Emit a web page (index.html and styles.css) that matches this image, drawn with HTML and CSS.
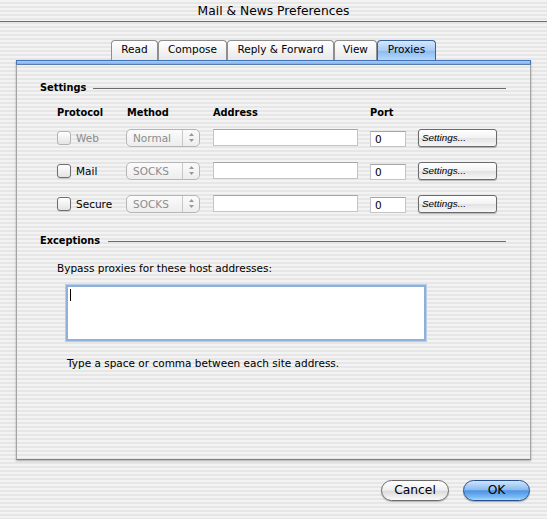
FILE: index.html
```html
<!DOCTYPE html>
<html>
<head>
<meta charset="utf-8">
<link rel="stylesheet" href="styles.css">
</head>
<body>
<div class="titlebar">Mail &amp; News Preferences</div>
<div class="tabs">
  <div class="tab t-read">Read</div>
  <div class="tab t-compose">Compose</div>
  <div class="tab t-reply">Reply &amp; Forward</div>
  <div class="tab t-view">View</div>
  <div class="tab t-proxies active">Proxies</div>
</div>
<div class="panel">
  <div class="bluebar"></div>
  <div class="content">
    <div class="ghead"><span>Settings</span><div class="rule"></div></div>
    <div class="grid">
      <div class="hdr">Protocol</div>
      <div class="hdr hdr-method">Method</div>
      <div class="hdr">Address</div>
      <div class="hdr">Port</div>
      <div></div>

      <div class="proto disabled"><span class="checkbox"></span><span>Web</span></div>
      <div class="popup"><span class="pop-text">Normal</span><span class="pop-arrows"><svg width="7" height="11" viewBox="0 0 7 11"><path d="M3.5 1 L6 4 L1 4 Z M3.5 10 L6 7 L1 7 Z" fill="#9a9a9a"/></svg></span></div>
      <div class="field addr"></div>
      <div class="field port">0</div>
      <div class="sbtn">Settings...</div>

      <div class="proto"><span class="checkbox"></span><span>Mail</span></div>
      <div class="popup"><span class="pop-text">SOCKS</span><span class="pop-arrows"><svg width="7" height="11" viewBox="0 0 7 11"><path d="M3.5 1 L6 4 L1 4 Z M3.5 10 L6 7 L1 7 Z" fill="#9a9a9a"/></svg></span></div>
      <div class="field addr"></div>
      <div class="field port">0</div>
      <div class="sbtn">Settings...</div>

      <div class="proto"><span class="checkbox"></span><span>Secure</span></div>
      <div class="popup"><span class="pop-text">SOCKS</span><span class="pop-arrows"><svg width="7" height="11" viewBox="0 0 7 11"><path d="M3.5 1 L6 4 L1 4 Z M3.5 10 L6 7 L1 7 Z" fill="#9a9a9a"/></svg></span></div>
      <div class="field addr"></div>
      <div class="field port">0</div>
      <div class="sbtn">Settings...</div>
    </div>

    <div class="ghead exc"><span>Exceptions</span><div class="rule"></div></div>
    <div class="bypass">Bypass proxies for these host addresses:</div>
    <div class="textarea"><span class="caret"></span></div>
    <div class="hint">Type a space or comma between each site address.</div>
  </div>
</div>
<div class="buttons">
  <div class="btn cancel">Cancel</div>
  <div class="btn ok">OK</div>
</div>
</body>
</html>
```
FILE: styles.css
```css
html, body {
  margin: 0;
  padding: 0;
}
body {
  width: 547px;
  height: 519px;
  overflow: hidden;
  font-family: "DejaVu Sans", sans-serif;
  color: #000;
  background: repeating-linear-gradient(to bottom, #f3f3f3 0 2px, #e6e6e6 2px 4px);
}
.titlebar {
  height: 21px;
  border-bottom: 1px solid #6e6e6e;
  font-size: 12.3px;
  line-height: 22px;
  text-align: center;
}
.tabs {
  display: flex;
  justify-content: center;
  margin-top: 18px;
  height: 20px;
}
.tab {
  box-sizing: border-box;
  height: 20px;
  border: 1px solid #8e8e8e;
  border-bottom: none;
  border-radius: 4px 4px 0 0;
  background: linear-gradient(#ffffff, #e8e8e8);
  font-size: 10.5px;
  line-height: 16px;
  text-align: center;
}
.t-read { width: 47px; }
.t-compose { width: 69px; }
.t-reply { width: 107px; }
.t-view { width: 43px; }
.t-proxies { width: 59px; }
.tab.active {
  border-color: #36629f;
  background: linear-gradient(#d6e8fc, #a6ccf6 50%, #8dbcf2 55%, #b7d8fa);
}
.panel {
  margin: 0 16px;
  height: 400px;
  box-sizing: border-box;
  border: 1px solid #a4a4a4;
  border-top: none;
  border-bottom-color: #808080;
  box-shadow: 0 1px 2px rgba(0, 0, 0, 0.3);
}
.bluebar {
  height: 5px;
  margin: 0 -1px;
  box-sizing: border-box;
  border-top: 1px solid #4474b8;
  border-bottom: 1px solid #5b7da9;
  border-left: 1px solid #4474b8;
  border-right: 1px solid #4474b8;
  border-radius: 1px;
  background: linear-gradient(#a9cdf6, #7fb2ef);
}
.content {
  padding: 15px 24px 0 23px;
}
.ghead {
  display: flex;
  align-items: center;
  height: 14px;
  gap: 7px;
  font-weight: bold;
  font-size: 9.8px;
}
.ghead .rule {
  flex: 1;
  height: 1px;
  margin-top: 2px;
  background: #6c6c6c;
}
.ghead.exc {
  margin-top: 13px;
  gap: 8px;
}
.grid {
  display: grid;
  grid-template-columns: 69px 87px 157px 48px 79px;
  grid-template-rows: 18px repeat(3, 33px);
  align-items: center;
  margin: 9px 0 0 17px;
}
.hdr {
  font-weight: bold;
  font-size: 9.8px;
}
.hdr-method { padding-left: 1px; }
.proto {
  display: flex;
  align-items: center;
  gap: 5px;
  font-size: 10.5px;
}
.checkbox {
  width: 14px;
  height: 14px;
  box-sizing: border-box;
  border: 1px solid #6f6f6f;
  border-radius: 3px;
  background: linear-gradient(#ffffff, #e4e4e4);
  box-shadow: 0 1px 1px rgba(0, 0, 0, 0.12);
}
.proto.disabled { color: #8a8a8a; }
.proto.disabled .checkbox { border-color: #b3b3b3; box-shadow: none; }
.popup {
  display: flex;
  width: 74px;
  height: 18px;
  box-sizing: border-box;
  border: 1px solid #b6b6b6;
  border-radius: 5px;
  background: linear-gradient(#fbfbfb, #ededed);
  color: #8c8c8c;
  font-size: 10.5px;
  line-height: 16px;
}
.pop-text {
  flex: 1;
  padding-left: 6px;
}
.pop-arrows {
  width: 16px;
  border-left: 1px solid #c8c8c8;
  display: flex;
  align-items: center;
  justify-content: center;
}
.field {
  box-sizing: border-box;
  height: 17px;
  background: #fff;
  border: 1px solid #c4c4c4;
  border-top-color: #a6a6a6;
}
.addr { width: 145px; }
.port {
  width: 36px;
  height: 16px;
  margin-top: 3px;
  font-size: 10.5px;
  line-height: 14px;
  padding-left: 4px;
}
.sbtn {
  box-sizing: border-box;
  width: 79px;
  height: 18px;
  border: 1px solid #6a6a6a;
  border-radius: 3px;
  background: linear-gradient(#ffffff, #f2f2f2 50%, #e2e2e2 51%, #f7f7f7);
  box-shadow: 0 1px 1px rgba(0, 0, 0, 0.25);
  font-family: "Liberation Sans", sans-serif;
  font-style: italic;
  font-size: 9.9px;
  line-height: 16px;
  padding-left: 3px;
}
.bypass {
  margin: 14px 0 0 17px;
  font-size: 10.5px;
  line-height: 14px;
}
.textarea {
  box-sizing: border-box;
  width: 360px;
  height: 56px;
  margin: 10px 0 0 26px;
  background: #fff;
  border: 2px solid #8fb0d8;
  box-shadow: 0 0 0 1px #b9cde6;
  padding: 2px 0 0 2px;
}
.caret {
  display: block;
  width: 1px;
  height: 12px;
  background: #000;
}
.hint {
  margin: 15px 0 0 27px;
  font-size: 10.5px;
  line-height: 14px;
}
.buttons {
  display: flex;
  justify-content: flex-end;
  gap: 14px;
  margin-top: 20px;
  padding-right: 17px;
}
.btn {
  box-sizing: border-box;
  height: 21px;
  border-radius: 11px;
  font-size: 12.3px;
  line-height: 19px;
  text-align: center;
}
.cancel {
  width: 68px;
  border: 1px solid #6a6a6a;
  background: linear-gradient(#ffffff, #f0f0f0 45%, #dcdcdc 55%, #fafafa);
  box-shadow: 0 1px 1px rgba(0, 0, 0, 0.25);
}
.ok {
  width: 67px;
  border: 1px solid #264f8f;
  background: linear-gradient(#cfe4fb, #8dbdf1 45%, #4f93e3 52%, #79baf6 85%, #a9dcff);
  box-shadow: 0 1px 1px rgba(0, 0, 0, 0.3);
}
```
